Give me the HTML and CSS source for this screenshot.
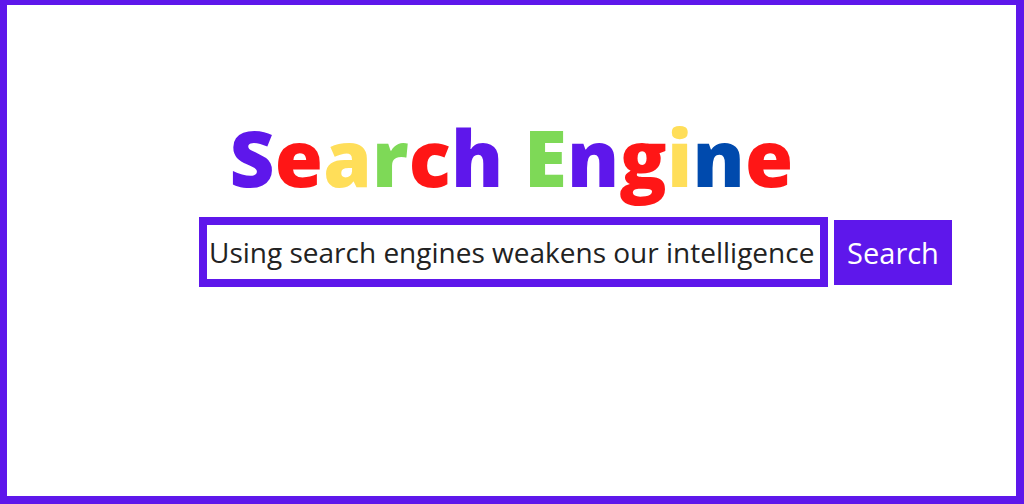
FILE: index.html
```html
<!DOCTYPE html>
<html>
<head>
<meta charset="utf-8">
<link rel="stylesheet" href="styles.css">
</head>
<body>
<div class="frame">
  <h1 class="title"><span class="c-purple">S</span><span class="c-red">e</span><span class="c-yellow">a</span><span class="c-green">r</span><span class="c-red">c</span><span class="c-purple">h</span> <span class="c-green">E</span><span class="c-purple">n</span><span class="c-red">g</span><span class="c-yellow">i</span><span class="c-blue">n</span><span class="c-red">e</span></h1>
  <form class="search-row">
    <input class="search-input" type="text" value="Using search engines weakens our intelligence">
    <button class="search-btn" type="button">Search</button>
  </form>
</div>
</body>
</html>
```
FILE: styles.css
```css
html, body {
  margin: 0;
  padding: 0;
  background: #ffffff;
}
.frame {
  box-sizing: border-box;
  width: 1024px;
  height: 504px;
  border-style: solid;
  border-color: #5e17eb;
  border-width: 5px 8px 8px 7px;
  display: flex;
  flex-direction: column;
  align-items: center;
  font-family: "Open Sans", sans-serif;
}
.title {
  margin: 114px 0 0 0;
  font-size: 78px;
  font-weight: 800;
  line-height: 77px;
  letter-spacing: 0.2px;
  white-space: nowrap;
}
.c-purple { color: #5e17eb; }
.c-red { color: #ff1616; }
.c-yellow { color: #ffde59; }
.c-green { color: #7ed957; }
.c-blue { color: #004aad; }
.search-row {
  display: flex;
  align-items: center;
  gap: 6px;
  align-self: flex-start;
  margin: 21px 0 0 192px;
}
.search-input {
  box-sizing: border-box;
  width: 629px;
  height: 70px;
  border: 8px solid #5e17eb;
  padding: 0 0 0 2px;
  margin: 0;
  font-family: "Open Sans", sans-serif;
  font-size: 28px;
  color: #222222;
  outline: none;
  background: #fff;
}
.search-btn {
  box-sizing: border-box;
  width: 118px;
  height: 65px;
  border: none;
  margin: 0;
  padding: 0;
  background: #5e17eb;
  color: #ffffff;
  font-family: "Open Sans", sans-serif;
  font-size: 29px;
}
```
